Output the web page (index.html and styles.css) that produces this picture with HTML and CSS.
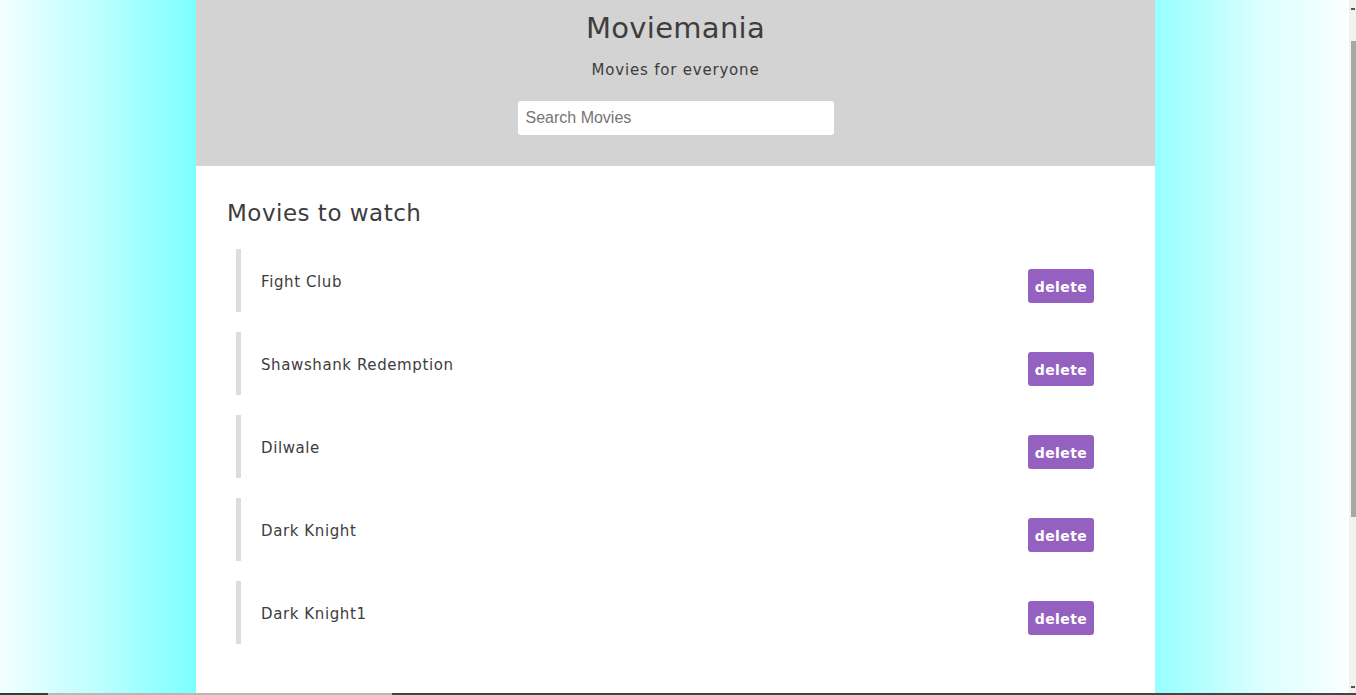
FILE: index.html
```html
<!DOCTYPE html>
<html lang="en">
<head>
<meta charset="utf-8">
<title>Moviemania</title>
<link rel="stylesheet" href="styles.css">
</head>
<body>
<div class="screen">
  <div class="page">
    <div class="container">
      <header class="header">
        <h1 class="title">Moviemania</h1>
        <p class="tagline">Movies for everyone</p>
        <input class="search" type="text" placeholder="Search Movies">
      </header>
      <main class="content">
        <h2 class="section-title">Movies to watch</h2>
        <ul class="movie-list">
          <li class="movie"><span class="movie-name">Fight Club</span><button class="delete">delete</button></li>
          <li class="movie"><span class="movie-name">Shawshank Redemption</span><button class="delete">delete</button></li>
          <li class="movie"><span class="movie-name">Dilwale</span><button class="delete">delete</button></li>
          <li class="movie"><span class="movie-name">Dark Knight</span><button class="delete">delete</button></li>
          <li class="movie"><span class="movie-name">Dark Knight1</span><button class="delete">delete</button></li>
        </ul>
      </main>
    </div>
  </div>
  <div class="scrollbar">
    <div class="arrow arrow-up"></div>
    <div class="thumb"></div>
    <div class="arrow arrow-down"></div>
  </div>
</div>
<div class="taskbar">
  <div class="tb-a"></div>
  <div class="tb-b"></div>
  <div class="tb-c"></div>
</div>
</body>
</html>
```

FILE: styles.css
```css
html, body {
  margin: 0;
  padding: 0;
  height: 695px;
  overflow: hidden;
}

body {
  display: flex;
  flex-direction: column;
  font-family: "Comic Sans MS", "DejaVu Sans", sans-serif;
  color: #444;
}

.screen {
  display: flex;
  height: 693px;
}

.page {
  flex: 1;
  display: flex;
  padding-left: 196px;
  background: linear-gradient(to right, #f3ffff 0%, #b5ffff 8%, #7cffff 14.5%, #7cffff 50%, #95ffff 85.6%, #d8ffff 93%, #fbffff 100%);
}

.container {
  width: 959px;
  background: #fff;
  display: flex;
  flex-direction: column;
}

.header {
  background: #d3d3d3;
  height: 166px;
  display: flex;
  flex-direction: column;
  align-items: center;
}

.title {
  margin: 9px 0 0;
  font-size: 29px;
  font-weight: normal;
  line-height: 38px;
  color: #3d3d3d;
  letter-spacing: 0.3px;
}

.tagline {
  margin: 13px 0 0;
  font-size: 15px;
  line-height: 20px;
  letter-spacing: 0.8px;
  color: #3d3d3d;
}

.search {
  margin-top: 21px;
  width: 316px;
  height: 34px;
  box-sizing: border-box;
  border: none;
  border-radius: 3px;
  padding: 0 8px;
  font-family: "Liberation Sans", Arial, sans-serif;
  font-size: 16px;
  color: #333;
  background: #fff;
}

.search::placeholder {
  color: #757575;
}

.content {
  flex: 1;
  padding: 32px 30px 0 30px;
}

.section-title {
  margin: 0 0 0 1px;
  font-size: 23px;
  font-weight: normal;
  line-height: 30px;
  color: #3d3d3d;
  letter-spacing: 0.5px;
}

.movie-list {
  list-style: none;
  margin: 21px 0 0 10px;
  padding: 0;
  display: flex;
  flex-direction: column;
  gap: 20px;
}

.movie {
  height: 63px;
  box-sizing: border-box;
  border-left: 5px solid #dddddd;
  padding: 20px 31px 0 20px;
  display: flex;
  justify-content: space-between;
  align-items: flex-start;
}

.movie-name {
  font-size: 15px;
  line-height: 24px;
  letter-spacing: 0.6px;
  color: #3d3d3d;
  margin-top: 1px;
}

.delete {
  width: 66px;
  height: 34px;
  border: none;
  border-radius: 3px;
  background: #9561c0;
  color: #fff;
  font-family: "Comic Sans MS", "DejaVu Sans", sans-serif;
  font-weight: bold;
  font-size: 14px;
  letter-spacing: 0.4px;
  padding: 2px 0 0;
}

.scrollbar {
  width: 7px;
  background: #f1f1f1;
  display: flex;
  flex-direction: column;
  align-items: flex-end;
}

.arrow {
  width: 4px;
  height: 2px;
  background: #555;
  margin-right: 1px;
}

.arrow-up {
  margin-top: 8px;
}

.thumb {
  width: 5px;
  height: 476px;
  margin-top: 31px;
  background: #a8a8a8;
}

.arrow-down {
  margin-top: auto;
  margin-bottom: 5px;
}

.taskbar {
  height: 2px;
  display: flex;
}

.tb-a {
  width: 48px;
  background: #3a3a3a;
}

.tb-b {
  width: 344px;
  background: #b8b8b8;
}

.tb-c {
  flex: 1;
  background: #444;
}
```
